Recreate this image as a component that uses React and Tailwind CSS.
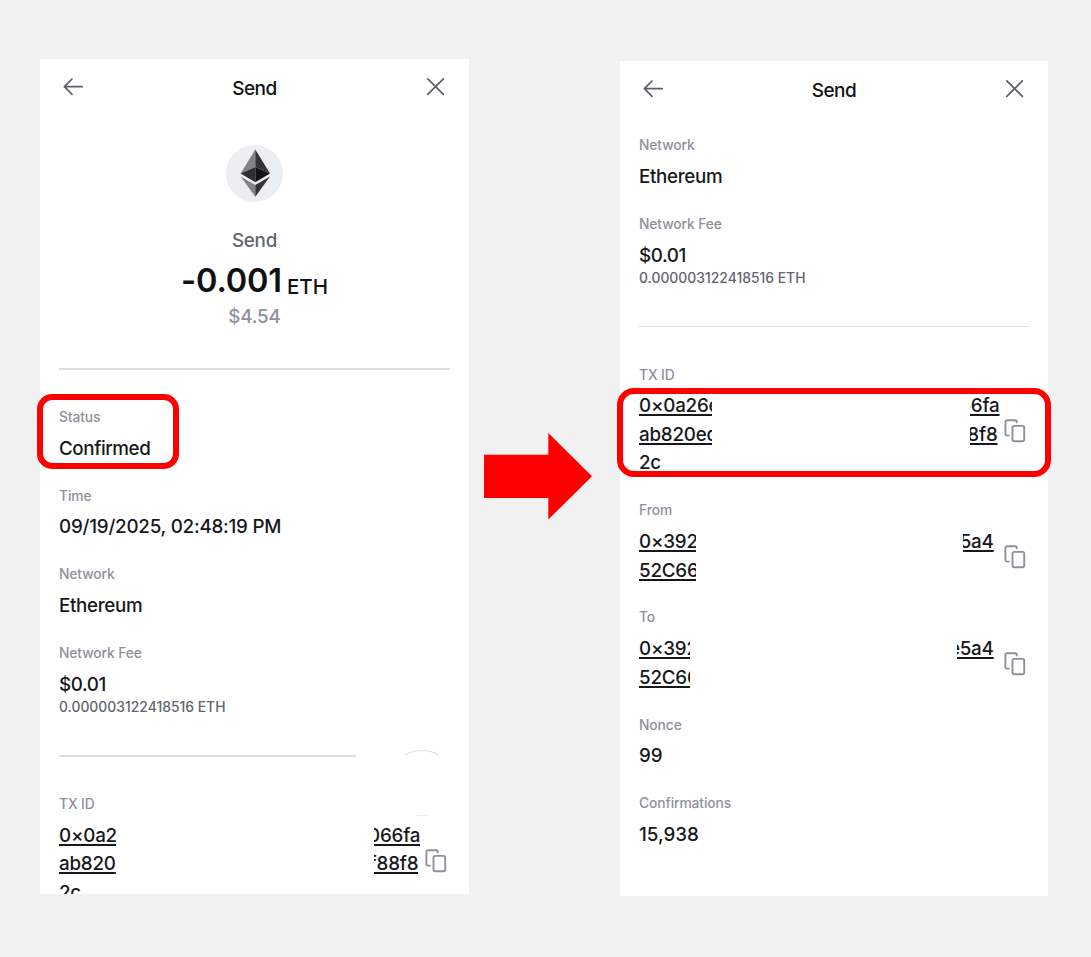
import React from "react";

function BackIcon() {
  return (
    <svg className="h-[20px] w-[22px]" viewBox="0 0 22 20" fill="none" stroke="#5c5f6a" strokeWidth="1.7" strokeLinecap="round" strokeLinejoin="round">
      <path d="M20.2 9.7H2.4M10 2L2.4 9.7l7.6 7.7" />
    </svg>
  );
}

function CloseIcon() {
  return (
    <svg className="h-[20px] w-[20px]" viewBox="0 0 20 20" fill="none" stroke="#5c5f6a" strokeWidth="1.7" strokeLinecap="round">
      <path d="M2.8 1.8l15.6 15.6M18.4 1.8L2.8 17.4" />
    </svg>
  );
}

function CopyIcon() {
  return (
    <svg className="h-[24px] w-[22px] shrink-0" viewBox="0 0 22 24" fill="none" stroke="#8e919c" strokeWidth="1.9" strokeLinecap="round" strokeLinejoin="round">
      <path d="M12.8 3.4V2.9A1.7 1.7 0 0 0 11.1 1.2H3.1A1.7 1.7 0 0 0 1.4 2.9V14.9A1.7 1.7 0 0 0 3.1 16.6H4.9" />
      <rect x="8.5" y="6.9" width="11.7" height="15.4" rx="1.7" />
    </svg>
  );
}

function EthLogo() {
  return (
    <svg className="h-[57px] w-[57px]" viewBox="0 0 57 57">
      <circle cx="28.5" cy="28.5" r="28.5" fill="#ebeff2" />
      <path d="M29.3 4.6L14.6 28.6L29.3 22Z" fill="#828384" />
      <path d="M29.3 4.6L44 28.6L29.3 22Z" fill="#343434" />
      <path d="M29.3 22L14.6 28.6L29.3 37.3Z" fill="#2f3030" />
      <path d="M29.3 22L44 28.6L29.3 37.3Z" fill="#131313" />
      <path d="M14.6 31.4L29.3 40V51.8Z" fill="#828384" />
      <path d="M44 31.4L29.3 40V51.8Z" fill="#343434" />
    </svg>
  );
}

function Header() {
  return (
    <div className="flex h-[58px] items-center justify-between pl-[22px] pr-[24px]">
      <div className="-mt-[2px]"><BackIcon /></div>
      <h1 className="mt-px text-[19px] leading-[28px] font-[450] tracking-[-0.03em] text-[#101114]">Send</h1>
      <div className="-mt-[2px]"><CloseIcon /></div>
    </div>
  );
}

function Label({ children }) {
  return <div className="text-[13.8px] leading-[19px] font-[450] tracking-[-0.007em] text-[#8e919c]">{children}</div>;
}

function Field({ label, tracking = "tracking-normal", children }) {
  return (
    <div className="mb-[23.4px]">
      <Label>{label}</Label>
      <div className={`mt-[7.6px] text-[18.8px] leading-[28.6px] font-[450] text-[#17181c] ${tracking}`}>{children}</div>
    </div>
  );
}

const underline = "underline decoration-[1.5px] underline-offset-[2px]";

function Row({ left, leftClass, right, rightClass }) {
  return (
    <div className="flex h-[28.6px] whitespace-nowrap">
      <span className={`${leftClass} shrink-0 overflow-hidden ${underline}`}>{left}</span>
      {right && (
        <span className={`${rightClass} flex shrink-0 justify-end overflow-hidden`}>
          <span className={underline}>{right}</span>
        </span>
      )}
    </div>
  );
}

function Hash({ label, children, iconClass, className }) {
  return (
    <div className={`mb-[23.4px] ${className || ""}`}>
      <Label>{label}</Label>
      <div className="mt-[7.6px] flex items-center text-[18.8px] leading-[28.6px] font-[450] tracking-[-0.011em] text-[#17181c]">
        <div className="w-[365px] shrink-0">{children}</div>
        <div className={iconClass}><CopyIcon /></div>
      </div>
    </div>
  );
}

function FeeField() {
  return (
    <div>
      <Label>Network Fee</Label>
      <div className="mt-[7.6px] text-[18.8px] leading-[28.6px] font-[450] tracking-[-0.02em] text-[#17181c]">$0.01</div>
      <div className="-mt-[1px] text-[13.9px] leading-[19px] font-[450] text-[#62656f]">0.000003122418516 ETH</div>
    </div>
  );
}

function LeftPanel() {
  return (
    <section className="mt-[59px] h-[835px] w-[429px] shrink-0 overflow-hidden bg-white">
      <Header />
      <div className="mt-[28px] flex flex-col items-center">
        <EthLogo />
        <div className="mt-[25px] text-[18.8px] leading-[28px] font-[450] tracking-[-0.015em] text-[#62656f]">Send</div>
        <div className="mt-[3px] flex h-[46px] items-baseline gap-[5px] text-[#101114]">
          <span className="text-[32.5px] leading-[46px] font-semibold tracking-[-0.004em]">-0.001</span>
          <span className="relative top-[2px] text-[20.5px] font-[450]">ETH</span>
        </div>
        <div className="mt-[-1px] text-[18.8px] leading-[28px] font-[450] tracking-[-0.01em] text-[#8e919c]">$4.54</div>
      </div>
      <div className="mx-[19px] mt-[37px] h-[1.5px] bg-[#dfe0e2]" />
      <div className="px-[19px] pt-[38.7px]">
        <Field label="Status" tracking="tracking-[-0.022em]">Confirmed</Field>
        <Field label="Time" tracking="tracking-[-0.012em]">09/19/2025, 02:48:19 PM</Field>
        <Field label="Network" tracking="tracking-[-0.017em]">Ethereum</Field>
        <FeeField />
        <div className="mt-[33px] flex h-[66px] justify-between">
          <div className="mt-[5px] h-[1.5px] w-[297px] bg-[#dfe0e2]" />
          <svg className="mr-[10px] h-[68px] w-[36px]" viewBox="0 0 36 68" fill="none" stroke="#dfe0e2" strokeWidth="1.2">
            <path d="M1 5.2A33 33 0 0 1 35 5.2" />
            <path d="M12 65.2A33 33 0 0 0 24 65.2" strokeWidth="0.7" />
          </svg>
        </div>
        <Hash label="TX ID" className="-mt-[21px]" iconClass="ml-[1px] -mt-[8px]">
          <Row left="0×0a2" leftClass="w-[57px]" right="066fa" rightClass="ml-[258px] w-[46.3px]" />
          <Row left="ab820" leftClass="w-[57px]" right="f88f8" rightClass="ml-[258px] w-[44.3px]" />
          <Row left="2c" leftClass="w-[57px]" />
        </Hash>
      </div>
    </section>
  );
}

function RightPanel() {
  return (
    <section className="mt-[61px] h-[835px] w-[428px] shrink-0 overflow-hidden bg-white">
      <Header />
      <div className="px-[19px] pt-[17.4px]">
        <Field label="Network" tracking="tracking-[-0.017em]">Ethereum</Field>
        <FeeField />
        <div className="mt-[37.6px] mb-[38.3px] h-[1.5px] bg-[#dfe0e2]" />
        <Hash label="TX ID" iconClass="-mt-[8px]">
          <Row left="0×0a26e" leftClass="w-[73px]" right="66fa" rightClass="ml-[258px] w-[29.5px]" />
          <Row left="ab820ed" leftClass="w-[73px]" right="88f8" rightClass="ml-[258px] w-[27.5px]" />
          <Row left="2c" leftClass="w-[73px]" />
        </Hash>
        <Hash label="From" iconClass="">
          <Row left="0×392" leftClass="w-[57px]" right="e5a4" rightClass="ml-[267px] w-[30.7px]" />
          <Row left="52C66" leftClass="w-[57px]" />
        </Hash>
        <Hash label="To" iconClass="">
          <Row left="0×392" leftClass="w-[51px]" right="e5a4" rightClass="ml-[267px] w-[36.7px]" />
          <Row left="52C66" leftClass="w-[51px]" />
        </Hash>
        <Field label="Nonce">99</Field>
        <Field label="Confirmations">15,938</Field>
      </div>
    </section>
  );
}

export default function App() {
  return (
    <main className="relative flex h-[957px] w-[1091px] overflow-hidden bg-[#f1f1f1] pl-[40px] font-['Inter',sans-serif]">
      <LeftPanel />
      <div className="flex w-[151px] shrink-0 pt-[433px] pl-[15px]">
        <svg className="h-[87px] w-[109px]" viewBox="0 0 109 87">
          <path d="M0 21.7H64.3V0L108 43.3L64.3 86.6V65H0Z" fill="#ff0000" />
        </svg>
      </div>
      <RightPanel />
      <div className="absolute top-[394px] left-[37px] h-[75px] w-[142px] rounded-[15px] border-[6px] border-[#ff0000]" />
      <div className="absolute top-[388px] left-[617px] h-[89px] w-[434px] rounded-[17px] border-[6px] border-[#ff0000]" />
    </main>
  );
}
